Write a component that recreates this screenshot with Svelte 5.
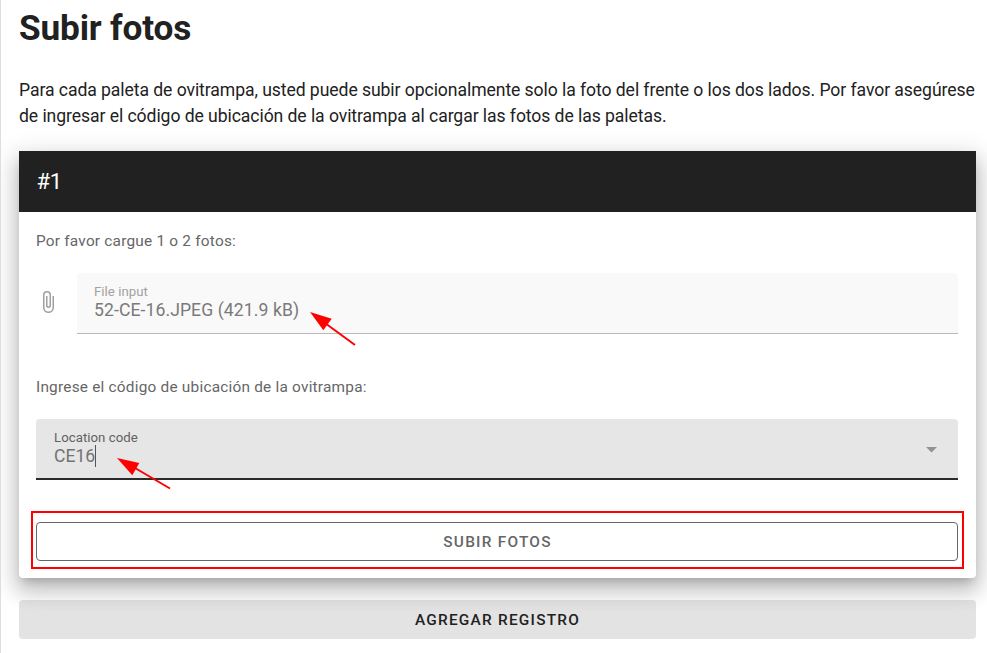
<script>
  let file = '52-CE-16.JPEG (421.9 kB)';
  let code = 'CE16';
</script>

<main>
  <h1>Subir fotos</h1>
  <p class="intro">
    Para cada paleta de ovitrampa, usted puede subir opcionalmente solo la foto del frente o los dos lados. Por favor asegúrese<br />
    de ingresar el código de ubicación de la ovitrampa al cargar las fotos de las paletas.
  </p>

  <section class="card">
    <header>#1</header>
    <div class="body">
      <p class="hint">Por favor cargue 1 o 2 fotos:</p>
      <div class="file-row">
        <svg class="clip" viewBox="0 0 24 24" width="24" height="24">
          <path d="M16.5,6V17.5A4,4 0 0,1 12.5,21.5A4,4 0 0,1 8.5,17.5V5A2.5,2.5 0 0,1 11,2.5A2.5,2.5 0 0,1 13.5,5V15.5A1,1 0 0,1 12.5,16.5A1,1 0 0,1 11.5,15.5V6H10V15.5A2.5,2.5 0 0,0 12.5,18A2.5,2.5 0 0,0 15,15.5V5A4,4 0 0,0 11,1A4,4 0 0,0 7,5V17.5A5.5,5.5 0 0,0 12.5,23A5.5,5.5 0 0,0 18,17.5V6H16.5Z" />
        </svg>
        <div class="field file">
          <span class="label">File input</span>
          <span class="value">{file}</span>
        </div>
      </div>
      <p class="hint second">Ingrese el código de ubicación de la ovitrampa:</p>
      <div class="field code">
        <div class="text">
          <span class="label">Location code</span>
          <span class="value">{code}<i class="caret"></i></span>
        </div>
        <svg class="drop" viewBox="0 0 11 6" width="11" height="6"><path d="M0 0H11L5.5 5.5Z" /></svg>
      </div>
      <button class="submit">SUBIR FOTOS</button>
    </div>
    <div class="highlight"></div>
  </section>

  <button class="add">AGREGAR REGISTRO</button>

  <svg class="arrows" width="987" height="653" viewBox="0 0 987 653">
    <g stroke="#f00" stroke-width="2" fill="#f00">
      <path d="M327 324.5L355 345" />
      <path d="M310 312L331.7 318.7L323.3 330.3Z" stroke="none" />
      <path d="M135 468L170 488.5" />
      <path d="M117 458L139.3 463L132.3 475.2Z" stroke="none" />
    </g>
  </svg>
</main>

<style>
  :global(body) { background: #fff; }
  main {
    position: relative;
    box-sizing: border-box;
    width: 987px;
    height: 653px;
    overflow: hidden;
    padding: 2px 11px 0 18px;
    border-left: 1px solid #dedede;
    font-family: Roboto, "Liberation Sans", sans-serif;
    font-size: 17.6px;
    color: #212121;
  }
  h1 {
    margin: 0;
    font-size: 35.2px;
    line-height: 53px;
    font-weight: 700;
    letter-spacing: -0.17px;
  }
  .intro {
    margin: 22px 0 0;
    height: 74px;
    line-height: 26px;
    letter-spacing: -0.075px;
    white-space: nowrap;
  }
  .card {
    position: relative;
    box-sizing: border-box;
    height: 427px;
    border-radius: 0 0 4px 4px;
    background: #fff;
    box-shadow:
      0 7.7px 8.8px -4.4px rgba(0, 0, 0, 0.2),
      0 13.2px 18.7px 2.2px rgba(0, 0, 0, 0.14),
      0 5.5px 24.2px 4.4px rgba(0, 0, 0, 0.12);
  }
  header {
    height: 61px;
    padding-left: 17.5px;
    background: #212121;
    color: #fff;
    font-size: 22px;
    line-height: 61px;
    letter-spacing: -0.3px;
  }
  .body {
    display: flex;
    flex-direction: column;
    padding: 18px 18px 0 17px;
  }
  .hint {
    margin: 0;
    height: 22px;
    line-height: 22px;
    font-size: 15.4px;
    letter-spacing: 0.215px;
    color: #666;
  }
  .second { margin-top: 42px; }
  .file-row {
    display: flex;
    align-items: center;
    gap: 17px;
    margin-top: 21px;
  }
  .clip {
    margin-bottom: 3px;
    fill: #a0a0a0;
  }
  .field {
    box-sizing: border-box;
    height: 61px;
    padding: 9px 17px 0;
    border-radius: 4px 4px 0 0;
  }
  .file {
    flex: 1;
    background: #f9f9f9;
    border-bottom: 1px solid #b9b9b9;
  }
  .label {
    display: block;
    height: 18px;
    line-height: 19px;
    font-size: 13.2px;
    letter-spacing: 0.05px;
    color: #a1a1a1;
  }
  .value {
    display: flex;
    height: 20px;
    line-height: 20px;
    color: #7a7a7a;
  }
  .file .value { letter-spacing: 0.085px; }
  .code {
    display: flex;
    justify-content: space-between;
    margin-top: 21px;
    padding: 9px 21px 0 18px;
    background: #e6e6e6;
    border-bottom: 2px solid #2b2b2b;
  }
  .code .label { color: #626262; }
  .code .value { color: #737373; }
  .caret {
    width: 1px;
    height: 22px;
    margin-top: -1px;
    background: #555;
  }
  .drop {
    margin-top: 19px;
    fill: #929292;
  }
  button {
    display: block;
    box-sizing: border-box;
    width: 100%;
    height: 39px;
    padding: 0;
    border-radius: 4px;
    font-family: inherit;
    font-size: 15.4px;
    font-weight: 500;
    letter-spacing: 1.24px;
  }
  .submit {
    margin-top: 42px;
    padding-left: 1px;
    border: 1px solid #666;
    background: transparent;
    color: #666;
  }
  .highlight {
    position: absolute;
    left: 12px;
    top: 360px;
    box-sizing: border-box;
    width: 933px;
    height: 58px;
    border: 2px solid #f00;
  }
  .add {
    position: relative;
    margin-top: 22px;
    border: 0;
    background: rgba(33, 33, 33, 0.125);
    color: #212121;
  }
  .arrows {
    position: absolute;
    left: -1px;
    top: 0;
    pointer-events: none;
  }
</style>
